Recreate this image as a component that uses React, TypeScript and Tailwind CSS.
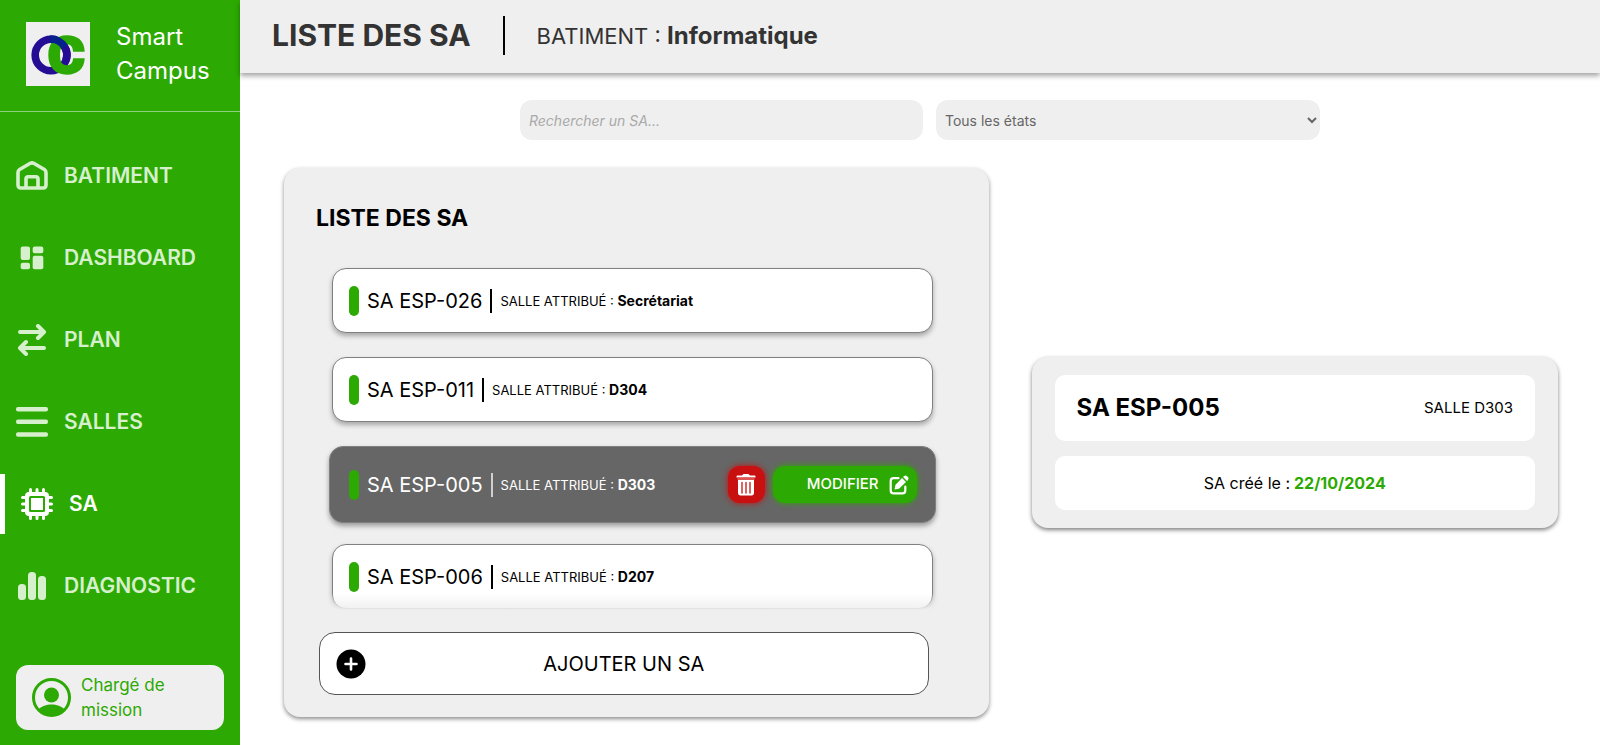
import { ReactNode } from "react";

const GREEN = "#2CA902";

function Logo() {
  return (
    <svg viewBox="0 0 64 64" className="size-16 shrink-0" role="img" aria-label="Smart Campus">
      <rect width="64" height="64" fill="#efefef" />
      <circle cx="25" cy="33" r="15.8" fill="none" stroke="#240d94" strokeWidth="7.6" />
      <path
        d="M58.700 29.700C58.500 18 51 13.200 41 13.200C29 13.200 22.300 21 22.300 33C22.300 45 29 52.700 41 52.700C51 52.700 58.500 47 58.700 36.300H47C47 41 44.500 43.200 41 43.200C36 43.200 34 40 34 33C34 26 36 22.300 41 22.300C44.500 22.300 47 25 47 29.700Z"
        fill={GREEN}
      />
      <path d="M38.400 24.500A15.800 15.800 0 0 1 40 38.500" fill="none" stroke="#240d94" strokeWidth="7.6" />
      <path d="M24 17.200A15.800 15.800 0 0 1 38.700 25" fill="none" stroke="#06208c" strokeWidth="7.6" />
    </svg>
  );
}

function HomeIcon() {
  return (
    <svg viewBox="0 0 32 32" className="size-8" fill="none" stroke="currentColor" strokeWidth="3.600" strokeLinejoin="round" aria-hidden="true">
      <path d="M2 12.500C2 11.200 2.500 10.200 3.600 9.500L14.300 3.300C15.400 2.700 16.600 2.700 17.700 3.300L28.400 9.500C29.500 10.200 30 11.200 30 12.500V25C30 27 29 28 27 28H5C3 28 2 27 2 25Z" />
      <path d="M10 28V19C10 17.500 10.800 16.700 12.300 16.700H19.700C21.200 16.700 22 17.500 22 19V28" />
    </svg>
  );
}

function DashboardIcon() {
  return (
    <svg viewBox="0 0 32 32" className="size-8" fill="currentColor" aria-hidden="true">
      <rect x="4.700" y="4.500" width="9.300" height="13.500" rx="2" />
      <rect x="16.700" y="4.500" width="10.600" height="6.800" rx="2" />
      <rect x="4.700" y="20.700" width="9.300" height="6.500" rx="2" />
      <rect x="16.700" y="13.700" width="10.600" height="13.500" rx="2" />
    </svg>
  );
}

function PlanIcon() {
  return (
    <svg viewBox="0 0 32 32" className="size-8" fill="none" stroke="currentColor" strokeWidth="4" strokeLinecap="round" strokeLinejoin="round" aria-hidden="true">
      <path d="M4 8H28M22 2L28 8L22 14M28 24H4M10 18L4 24L10 30" />
    </svg>
  );
}

function ListIcon() {
  return (
    <svg viewBox="0 0 32 32" className="size-8" fill="currentColor" aria-hidden="true">
      <rect y="1" width="32" height="4.500" rx="2" />
      <rect y="13.600" width="32" height="4.500" rx="2" />
      <rect y="26.200" width="32" height="4.500" rx="2" />
    </svg>
  );
}

function ChipIcon() {
  return (
    <svg viewBox="0 0 32 32" className="size-8" aria-hidden="true">
      <path d="M9.500 1.500V30.500M16 1.500V30.500M22.500 1.500V30.500M1.500 9.500H30.500M1.500 16H30.500M1.500 22.500H30.500" stroke="currentColor" strokeWidth="3" strokeLinecap="round" />
      <rect x="4" y="4" width="24" height="24" rx="4" fill="currentColor" />
      <rect x="9" y="9" width="14" height="14" rx="0.500" fill="currentColor" stroke={GREEN} strokeWidth="2" />
    </svg>
  );
}

function ChartIcon() {
  return (
    <svg viewBox="0 0 32 32" className="size-8" fill="currentColor" aria-hidden="true">
      <rect x="2" y="14" width="8" height="16" rx="3.500" />
      <rect x="12" y="2" width="8" height="28" rx="3.500" />
      <rect x="22" y="6" width="8" height="24" rx="3.500" />
    </svg>
  );
}

function UserIcon() {
  return (
    <svg viewBox="0 0 40 40" className="size-10 shrink-0" fill="currentColor" aria-hidden="true">
      <circle cx="19.500" cy="19.500" r="18" fill="none" stroke="currentColor" strokeWidth="3" />
      <circle cx="19.500" cy="17" r="7.500" />
      <path d="M6.500 31.500C9.500 28 14.500 26.500 19.500 26.500S29.500 28 32.500 31.500C29 36 24.500 38 19.500 38S10 36 6.500 31.500Z" />
    </svg>
  );
}

function TrashIcon() {
  return (
    <svg viewBox="0 0 20 24" className="h-6 w-5" aria-hidden="true">
      <path d="M1.500 2.500H6L7.500 1H12.500L14 2.500H18.500Q19.500 2.500 19.500 3.500V4.500H0.500V3.500Q0.500 2.500 1.500 2.500Z" fill="#fff" />
      <path d="M1.500 4.500H18.500V7H1.500Z" fill="#dc5454" />
      <path d="M2 7H18V19.500Q18 22.500 15.500 22.500H4.500Q2 22.500 2 19.500Z" fill="#fff" />
      <path d="M6 9.500V20M10 9.500V20M14 9.500V20" stroke="#c81010" strokeWidth="1.300" strokeLinecap="round" />
    </svg>
  );
}

function EditIcon() {
  return (
    <svg viewBox="0 0 20 20" className="size-5" aria-hidden="true">
      <path d="M9.500 3.200H4.500Q1.700 3.200 1.700 6V15.500Q1.700 18.300 4.500 18.300H13.500Q16.300 18.300 16.300 15.500V11.500" fill="none" stroke="#fff" strokeWidth="2.200" strokeLinecap="round" />
      <path d="M13 3L17 7L10 13.700L5.500 14.600L6.400 10Z" fill="#fff" />
      <path d="M14 2L15.200 0.900Q16.500 0 17.700 1L19 2.300Q20 3.600 19 4.900L18 6Z" fill="#fff" />
    </svg>
  );
}

function PlusIcon() {
  return (
    <svg viewBox="0 0 30 30" className="size-[30px]" aria-hidden="true">
      <circle cx="15" cy="15" r="14.500" fill="#000" />
      <path d="M15 9.500V20.500M9.500 15H20.500" stroke="#fff" strokeWidth="2.600" strokeLinecap="round" />
    </svg>
  );
}

const nav: { label: string; icon: ReactNode; active?: boolean }[] = [
  { label: "BATIMENT", icon: <HomeIcon /> },
  { label: "DASHBOARD", icon: <DashboardIcon /> },
  { label: "PLAN", icon: <PlanIcon /> },
  { label: "SALLES", icon: <ListIcon /> },
  { label: "SA", icon: <ChipIcon />, active: true },
  { label: "DIAGNOSTIC", icon: <ChartIcon /> },
];

const items = [
  { name: "SA ESP-026", room: "Secrétariat" },
  { name: "SA ESP-011", room: "D304" },
  { name: "SA ESP-005", room: "D303", selected: true },
  { name: "SA ESP-006", room: "D207" },
];

function Sidebar() {
  return (
    <aside className="flex w-60 shrink-0 flex-col bg-[#2CA902] text-white">
      <div className="flex h-28 items-center gap-[26px] border-b border-[#8fd07a] pb-1 pl-[26px]">
        <Logo />
        <p className="text-[24px] leading-[34px]">Smart<br />Campus</p>
      </div>
      <nav className="mt-[34px] flex flex-col gap-[22px]">
        {nav.map((n) => (
          <a
            key={n.label}
            href="#"
            className={
              n.active
                ? "flex h-[60px] items-center gap-4 border-l-[5px] border-white pl-4 text-[21px] font-semibold"
                : "flex h-[60px] items-center gap-4 pl-4 text-[21px] font-semibold text-[#d6f0cd]"
            }
          >
            {n.icon}
            {n.label}
          </a>
        ))}
      </nav>
      <div className="mx-4 mt-auto mb-[15px] flex h-[65px] items-center gap-[9px] rounded-xl bg-[#efefef] pl-4 text-[17px] leading-[25px] text-[#2CA902]">
        <UserIcon />
        <p>Chargé de<br />mission</p>
      </div>
    </aside>
  );
}

function Item({ name, room, selected }: { name: string; room: string; selected?: boolean }) {
  return (
    <li
      className={
        selected
          ? "-mx-[3px] mb-[21px] flex h-[77px] shrink-0 items-center rounded-[14px] border border-[#808080] bg-[#666666] pr-[18px] pl-[19px] text-white shadow-[0_3px_5px_rgba(0,0,0,0.35)]"
          : "mb-6 flex h-[65px] shrink-0 items-center rounded-[14px] border border-[#808080] bg-white px-4 text-black shadow-[0_3px_5px_rgba(0,0,0,0.3)]"
      }
    >
      <span className="h-[30px] w-[10px] rounded-full bg-[#2CA902]" />
      <span className="ml-2 text-[20px]">{name}</span>
      <span className={selected ? "mx-2 h-6 w-[2px] bg-[#d0d0d0]" : "mx-2 h-6 w-[2px] bg-black"} />
      <span className="text-[13px]">
        SALLE ATTRIBUÉ : <b className="text-[14px]">{room}</b>
      </span>
      {selected && (
        <span className="ml-auto flex gap-2">
          <button aria-label="Supprimer" className="flex size-[37px] items-center justify-center rounded-xl bg-[#c81010] shadow-[0_0_6px_#c81010]">
            <TrashIcon />
          </button>
          <button className="flex h-[37px] w-36 items-center justify-end gap-[10px] rounded-xl bg-[#2CA902] pr-2 text-[15px] font-medium shadow-[0_0_6px_#2CA902]">
            MODIFIER
            <EditIcon />
          </button>
        </span>
      )}
    </li>
  );
}

export default function App() {
  return (
    <div className="flex min-h-screen bg-white font-['Inter','Liberation_Sans',sans-serif] text-black">
      <Sidebar />
      <div className="flex min-w-0 flex-1 flex-col">
        <header className="flex h-[73px] items-center bg-[#efefef] pb-[2px] pl-8 text-[#333333] shadow-[0_3px_5px_rgba(0,0,0,0.35)]">
          <h1 className="text-[30px] font-bold">LISTE DES SA</h1>
          <span className="mx-8 h-[39px] w-[2px] bg-black" />
          <p className="text-[22px]">
            BATIMENT : <b className="text-[24px]">Informatique</b>
          </p>
        </header>

        <main>
          <form className="mx-auto mt-[27px] flex w-[800px] gap-[13px] text-[14px]">
            <input
              type="text"
              aria-label="Rechercher un SA"
              placeholder="Rechercher un SA..."
              className="h-10 w-[403px] rounded-xl bg-[#efefef] px-[9px] placeholder:text-[#a9a9a9] placeholder:italic"
            />
            <select aria-label="État" className="h-10 flex-1 rounded-xl bg-[#efefef] px-[5px] text-[#666666]">
              <option>Tous les états</option>
            </select>
          </form>

          <div className="mt-7 mb-7 flex items-center gap-[43px] pr-[42px] pl-11">
            <section className="flex h-[549px] flex-[4_1_0] flex-col rounded-2xl bg-[#efefef] px-8 shadow-[0_2px_4px_rgba(0,0,0,0.45)]">
              <h2 className="mt-8 text-[23px] leading-9 font-bold">LISTE DES SA</h2>
              <div className="relative mt-8 mr-6 ml-4">
                <ul className="-mb-px flex flex-col">
                  {items.map((i) => (
                    <Item key={i.name} {...i} />
                  ))}
                </ul>
                <div className="absolute -inset-x-1 bottom-1 h-[35px] bg-linear-to-b from-[#efefef]/0 to-[#efefef] to-50%" />
              </div>
              <button className="mr-7 ml-[3px] grid h-[63px] shrink-0 grid-cols-[30px_1fr_30px] items-center rounded-2xl border border-[#555555] bg-white px-4 text-[20px]">
                <PlusIcon />
                AJOUTER UN SA
              </button>
            </section>

            <section className="flex flex-[3_1_0] flex-col gap-[15px] rounded-2xl bg-[#efefef] px-[23px] py-[18px] shadow-[0_2px_4px_rgba(0,0,0,0.5)]">
              <div className="flex h-[66px] items-center justify-between rounded-[10px] bg-white px-[22px]">
                <h2 className="text-[24px] font-bold">SA ESP-005</h2>
                <p className="text-[15px]">SALLE D303</p>
              </div>
              <p className="flex h-[54px] items-center justify-center gap-1 rounded-[10px] bg-white text-base">
                SA créé le : <b className="text-[#2CA902]">22/10/2024</b>
              </p>
            </section>
          </div>
        </main>
      </div>
    </div>
  );
}
